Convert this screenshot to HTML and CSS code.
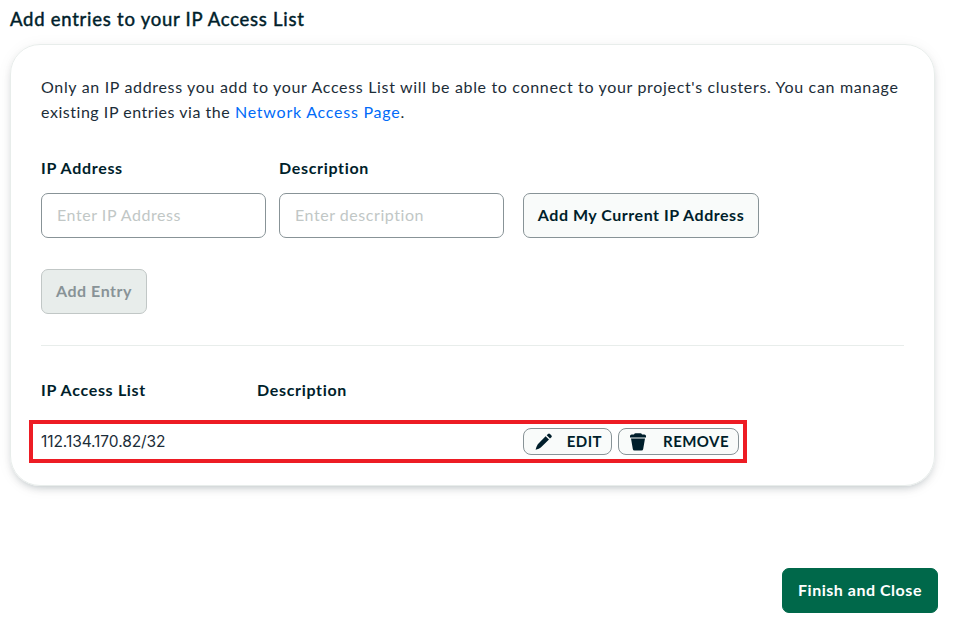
FILE: index.html
```html
<!DOCTYPE html>
<html lang="en">
<head>
<meta charset="utf-8">
<title>IP Access List</title>
<link rel="stylesheet" href="styles.css">
</head>
<body>
<main>
  <h1>Add entries to your IP Access List</h1>
  <section class="card">
    <p class="intro">Only an IP address you add to your Access List will be able to connect to your project's clusters. You can manage<br><span class="second">existing IP entries via the <a href="#">Network Access Page</a>.</span></p>
    <form class="fields">
      <label class="field"><span class="label">IP Address</span><input type="text" placeholder="Enter IP Address"></label>
      <label class="field"><span class="label">Description</span><input type="text" placeholder="Enter description"></label>
      <button type="button" class="btn current">Add My Current IP Address</button>
    </form>
    <button type="button" class="btn add" disabled>Add Entry</button>
    <hr>
    <div class="head"><span>IP Access List</span><span>Description</span></div>
    <div class="entry">
      <span class="ip">112.134.170.82/32</span>
      <button type="button" class="small edit"><svg width="18" height="18" viewBox="0 0 18 18"><path d="M10.6 3.2 14 6.6 5.8 14.6Q4.4 15.8.6 16.8 1.6 13 2.8 11.2ZM11.7 2.2 13 1Q14 .2 15 1L16.5 2.5Q17.3 3.4 16.4 4.3L15 5.6Z"/></svg><span>EDIT</span></button>
      <button type="button" class="small remove"><svg width="16" height="18" viewBox="0 0 16 18"><path d="M4 1.5Q4.4.3 5.6.3H10.4Q11.6.3 12 1.5H14.4Q16 1.5 16 3V4.4H0V3Q0 1.5 1.6 1.5ZM1 5.4H15L13.2 16Q13 17.6 11.4 17.6H4.6Q3 17.6 2.8 16Z"/></svg><span>REMOVE</span></button>
    </div>
  </section>
  <button type="button" class="btn finish">Finish and Close</button>
</main>
</body>
</html>
```
FILE: styles.css
```css
* { box-sizing: border-box; }
body { margin: 0; background: #fff; color: #1c2d38; font: 16px/25px Lato, "Open Sans", sans-serif; letter-spacing: .5px; }
main { display: flex; flex-direction: column; height: 626px; padding: 7px 18px 13px 10px; }
h1 { margin: 0 0 12px; color: #001e2b; font-size: 18.5px; line-height: 25px; font-weight: 400; letter-spacing: .75px; -webkit-text-stroke: .45px; white-space: nowrap; }
.card { width: 925px; height: 442px; padding: 29px 30px 30px; border: 1px solid #e8edeb; border-radius: 30px; box-shadow: 0 4px 10px -4px rgba(0,30,43,.3), 0 2px 16px rgba(0,30,43,.05); }
.intro { margin: 0; letter-spacing: .67px; white-space: nowrap; }
.second { letter-spacing: .54px; }
a { color: #016bf8; letter-spacing: .76px; text-decoration: none; }
.fields { display: flex; align-items: flex-end; gap: 13px; margin-top: 32px; }
.field { display: flex; flex-direction: column; gap: 14px; width: 225px; }
.label { line-height: 23px; }
.label, .head { color: #001e2b; font-weight: 700; letter-spacing: .68px; }
input { height: 45px; padding: 0 15px 2px; border: 1px solid #889397; border-radius: 7px; font: inherit; letter-spacing: .55px; }
input::placeholder { color: #c1c7c6; }
.btn { height: 45px; padding: 0 0 2px; border: 1px solid #889397; border-radius: 7px; background: #f9fbfa; color: #001e2b; font: inherit; font-weight: 700; letter-spacing: .52px; white-space: nowrap; }
.current { width: 236px; margin-left: 6px; }
.add { display: block; width: 106px; margin-top: 31px; background: #e8edeb; border-color: #c1c7c6; color: #889397; }
hr { height: 1px; margin: 31px 0; border: 0; background: #e8edeb; }
.head { display: grid; grid-template-columns: 216px 1fr; }
.entry { display: flex; align-items: center; gap: 6px; width: 718px; height: 43px; margin: 18px 0 0 -12px; padding: 0 4px 0 8px; border: 4px solid #ed1c24; }
.ip { flex: 1; font-family: Inter, sans-serif; font-size: 15.5px; letter-spacing: -.07px; }
.small { display: flex; align-items: center; justify-content: space-between; height: 27px; padding: 0 9px 0 11px; border: 1px solid #889397; border-radius: 8px; background: #f9fbfa; color: #001e2b; font: inherit; font-size: 15px; font-weight: 700; letter-spacing: .45px; }
.small svg { fill: currentColor; }
.edit { width: 89px; }
.remove { width: 121px; }
.finish { align-self: flex-end; width: 156px; margin-top: auto; background: #00684a; border-color: #00684a; color: #fff; }
```
